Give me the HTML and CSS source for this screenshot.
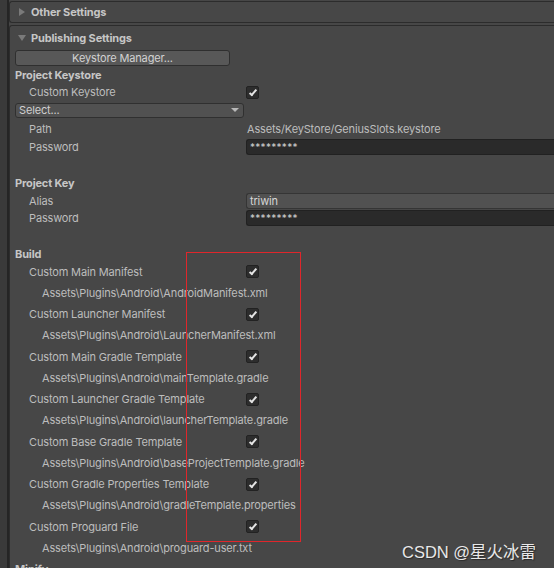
FILE: index.html
```html
<!DOCTYPE html>
<html>
<head>
<meta charset="utf-8">
<link rel="stylesheet" href="styles.css">
</head>
<body>
<div class="app">
  <div class="strip"></div>
  <div class="inspector">
    <div class="foldout closed">
      <span class="tri right"></span><span class="ftitle">Other Settings</span>
    </div>
    <div class="section">
      <div class="foldout-head"><span class="tri down"></span><span class="ftitle">Publishing Settings</span></div>
      <div class="row btnrow"><div class="button">Keystore Manager...</div></div>
      <div class="row head h16">Project Keystore</div>
      <div class="row sub h18"><span class="label">Custom Keystore</span><span class="value"><span class="check"></span></span></div>
      <div class="row h18"><div class="select">Select...<span class="arrow"></span></div></div>
      <div class="row sub h18 mt1"><span class="label">Path</span><span class="value text">Assets/KeyStore/GeniusSlots.keystore</span></div>
      <div class="row sub h18"><span class="label">Password</span><span class="value"><span class="field dark">*********</span></span></div>
      <div class="spacer"></div>
      <div class="row head h18">Project Key</div>
      <div class="row sub h17"><span class="label">Alias</span><span class="value"><span class="field light">triwin</span></span></div>
      <div class="row sub h18"><span class="label">Password</span><span class="value"><span class="field dark">*********</span></span></div>
      <div class="spacer big"></div>
      <div class="row head h15">Build</div>
      <div class="list">
        <div class="row sub lr"><span class="label">Custom Main Manifest</span><span class="value"><span class="check"></span></span></div>
        <div class="row path lr">Assets\Plugins\Android\AndroidManifest.xml</div>
        <div class="row sub lr"><span class="label">Custom Launcher Manifest</span><span class="value"><span class="check"></span></span></div>
        <div class="row path lr">Assets\Plugins\Android\LauncherManifest.xml</div>
        <div class="row sub lr"><span class="label">Custom Main Gradle Template</span><span class="value"><span class="check"></span></span></div>
        <div class="row path lr">Assets\Plugins\Android\mainTemplate.gradle</div>
        <div class="row sub lr"><span class="label">Custom Launcher Gradle Template</span><span class="value"><span class="check"></span></span></div>
        <div class="row path lr">Assets\Plugins\Android\launcherTemplate.gradle</div>
        <div class="row sub lr"><span class="label">Custom Base Gradle Template</span><span class="value"><span class="check"></span></span></div>
        <div class="row path lr">Assets\Plugins\Android\baseProjectTemplate.gradle</div>
        <div class="row sub lr"><span class="label">Custom Gradle Properties Template</span><span class="value"><span class="check"></span></span></div>
        <div class="row path lr">Assets\Plugins\Android\gradleTemplate.properties</div>
        <div class="row sub lr"><span class="label">Custom Proguard File</span><span class="value"><span class="check"></span></span></div>
        <div class="row path lr">Assets\Plugins\Android\proguard-user.txt</div>
        <div class="row head lr">Minify</div>
      </div>
    </div>
  </div>
</div>
<div class="redbox"></div>
<div class="watermark">CSDN @星火冰雷</div>
</body>
</html>
```
FILE: styles.css
```css
html, body {
  margin: 0;
  padding: 0;
  width: 554px;
  height: 568px;
  overflow: hidden;
  background: #474747;
  font-family: Inter, "Noto Sans", sans-serif;
  font-size: 11px;
  letter-spacing: -0.15px;
  color: #bdbdbd;
}
.app {
  display: flex;
  height: 568px;
  overflow: hidden;
}
.strip {
  width: 7px;
  flex: none;
  background: #3a3a3a;
  border-right: 2px solid #252525;
}
.inspector {
  flex: 1;
  display: flex;
  flex-direction: column;
  min-width: 0;
  min-height: 0;
  overflow: hidden;
}
.foldout.closed {
  flex: none;
  margin-top: 1px;
  height: 20px;
  border: 1px solid #2c2c2c;
  border-right: none;
  border-radius: 3px 0 0 3px;
  display: flex;
  align-items: center;
  background: #474747;
}
.section {
  margin-top: 2px;
  flex: none;
  border: 1px solid #2c2c2c;
  border-right: none;
  border-bottom: none;
  border-radius: 3px 0 0 0;
  display: flex;
  flex-direction: column;
}
.foldout-head {
  flex: none;
  height: 23px;
  display: flex;
  align-items: center;
}
.tri {
  width: 0;
  height: 0;
  margin-left: 9px;
  margin-right: 6px;
}
.tri.right {
  border-top: 4px solid transparent;
  border-bottom: 4px solid transparent;
  border-left: 6px solid #7a7a7a;
}
.tri.down {
  border-left: 4px solid transparent;
  border-right: 4px solid transparent;
  border-top: 6px solid #7a7a7a;
  margin-left: 8px;
  margin-right: 5px;
}
.ftitle {
  font-weight: 700;
  color: #c6c6c6;
}
.row {
  display: flex;
  align-items: center;
  flex: none;
}
.btnrow {
  height: 18px;
  padding-left: 5px;
}
.button {
  width: 213px;
  height: 14px;
  background: #585858;
  border: 1px solid #2f2f2f;
  border-radius: 3px;
  display: flex;
  align-items: center;
  justify-content: center;
  color: #d2d2d2;
}
.h15 { height: 15px; }
.h16 { height: 16px; }
.h17 { height: 17px; }
.h18 { height: 18px; }
.mt1 { margin-top: 1px; }
.head {
  padding-left: 5px;
  font-weight: 700;
  color: #c6c6c6;
}
.sub .label {
  padding-left: 19px;
  width: 217px;
  flex: none;
  white-space: nowrap;
}
.value {
  flex: 1;
  display: flex;
  align-items: center;
  min-width: 0;
  white-space: nowrap;
}
.value.text {
  padding-left: 1px;
}
.check {
  width: 11px;
  height: 11px;
  background: #2d2d2d;
  border: 1px solid #222;
  border-radius: 2px;
  position: relative;
}
.check::after {
  content: "";
  position: absolute;
  left: 4px;
  top: 1px;
  width: 2px;
  height: 6px;
  border-right: 2px solid #e4e4e4;
  border-bottom: 2px solid #e4e4e4;
  transform: rotate(40deg);
}
.select {
  margin-left: 5px;
  width: 224px;
  height: 13px;
  background: #515151;
  border: 1px solid #303030;
  border-radius: 3px;
  padding-left: 3px;
  display: flex;
  align-items: center;
  justify-content: space-between;
  color: #cfcfcf;
}
.arrow {
  width: 0;
  height: 0;
  border-left: 4px solid transparent;
  border-right: 4px solid transparent;
  border-top: 4px solid #b8b8b8;
  margin-right: 4px;
}
.field {
  flex: 1;
  height: 14px;
  border-radius: 3px 0 0 3px;
  border: 1px solid #212121;
  border-right: none;
  padding-left: 3px;
  display: flex;
  align-items: center;
}
.field.dark {
  background: #2a2a2a;
  color: #d0d0d0;
  font-size: 10px;
  letter-spacing: 0.3px;
}
.field.light {
  background: #515151;
  border-color: #353535;
  color: #d6d6d6;
}
.spacer {
  height: 18px;
  flex: none;
}
.spacer.big {
  height: 19px;
}
.list {
  flex: none;
  display: flex;
  flex-direction: column;
}
.lr {
  height: 21.25px;
}
.path {
  padding-left: 32px;
  white-space: nowrap;
}
.redbox {
  position: absolute;
  left: 186px;
  top: 252px;
  width: 113px;
  height: 288px;
  border: 1px solid #e0262b;
}
.watermark {
  position: absolute;
  left: 402px;
  top: 539px;
  font-family: "Liberation Sans", "Noto Sans CJK SC", sans-serif;
  font-size: 16.5px;
  letter-spacing: 0;
  color: #e8e8e8;
  text-shadow: 1px 1px 1px #2a2a2a;
  white-space: nowrap;
}
```
